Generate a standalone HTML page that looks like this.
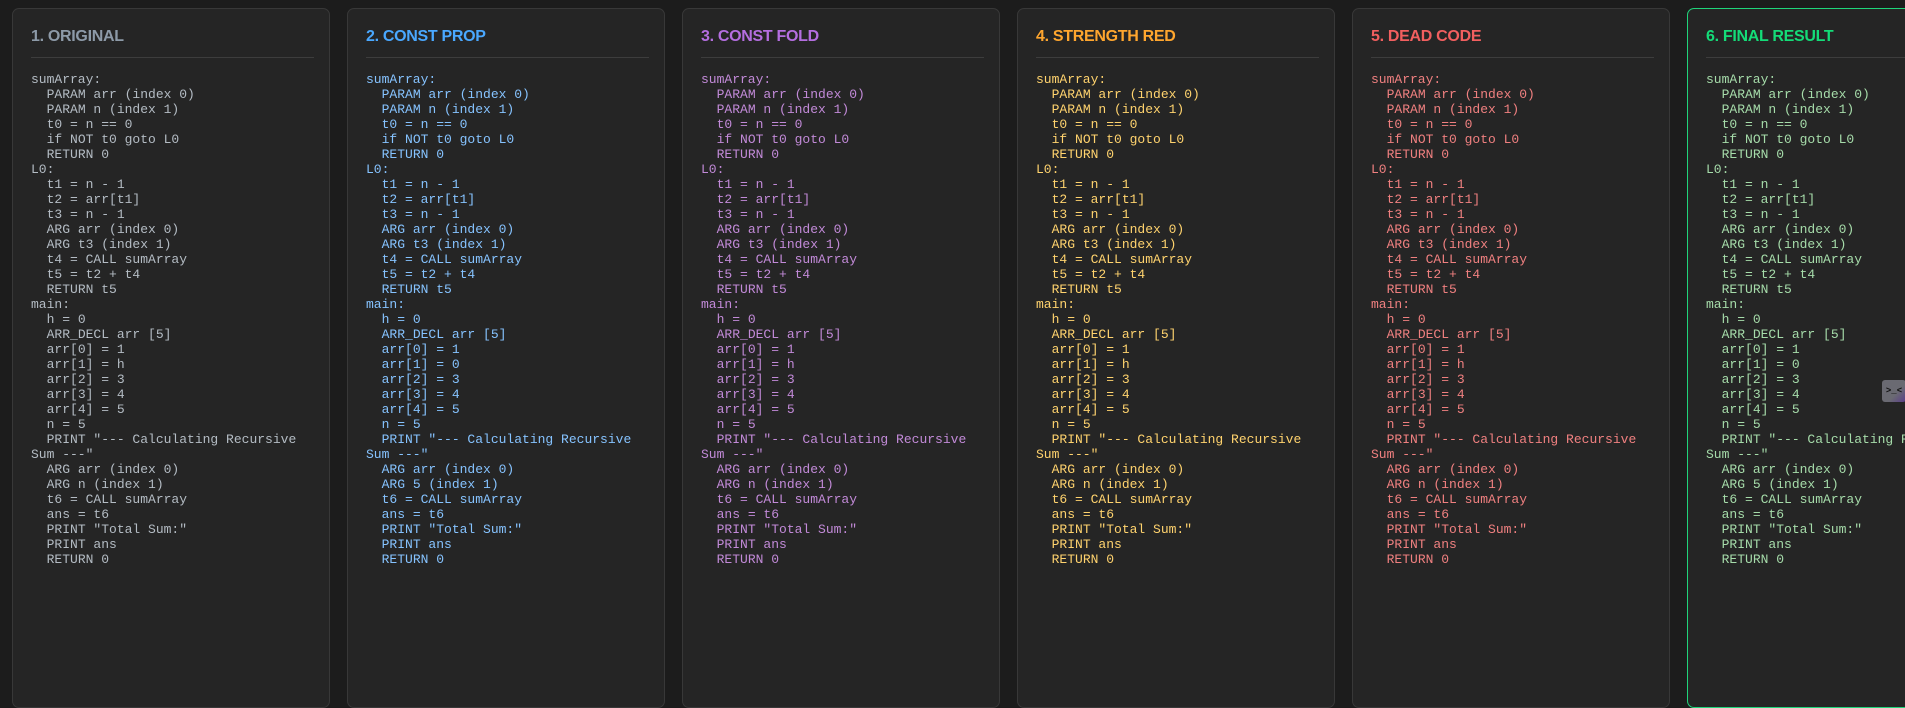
<!DOCTYPE html>
<html><head><meta charset="utf-8"><style>
html,body{margin:0;padding:0;background:#1c1c1c;width:1905px;height:684px;overflow:hidden}
.p{position:absolute;top:8px;width:318px;height:700px;background:#252525;border:1px solid #383838;border-radius:7px;box-sizing:border-box}
.t{position:absolute;left:18px;top:19px;font:bold 16px "Liberation Sans",sans-serif;letter-spacing:-0.3px}
.hr{position:absolute;left:18px;right:15px;top:48px;border-top:1px solid #3d3d3d}
pre{position:absolute;left:18px;top:63px;width:282px;margin:0;font:13px/15px "Liberation Mono","Courier New",monospace;white-space:pre-wrap;word-break:normal}
</style></head><body>
<div class="p" style="left:12px"><div class="t" style="color:#8d9aa8">1. ORIGINAL</div><div class="hr"></div><pre style="color:#b4bcc4">sumArray:
  PARAM arr (index 0)
  PARAM n (index 1)
  t0 = n == 0
  if NOT t0 goto L0
  RETURN 0
L0:
  t1 = n - 1
  t2 = arr[t1]
  t3 = n - 1
  ARG arr (index 0)
  ARG t3 (index 1)
  t4 = CALL sumArray
  t5 = t2 + t4
  RETURN t5
main:
  h = 0
  ARR_DECL arr [5]
  arr[0] = 1
  arr[1] = h
  arr[2] = 3
  arr[3] = 4
  arr[4] = 5
  n = 5
  PRINT "--- Calculating Recursive Sum ---"
  ARG arr (index 0)
  ARG n (index 1)
  t6 = CALL sumArray
  ans = t6
  PRINT "Total Sum:"
  PRINT ans
  RETURN 0</pre></div>
<div class="p" style="left:347px"><div class="t" style="color:#4aa8ff">2. CONST PROP</div><div class="hr"></div><pre style="color:#86c3ff">sumArray:
  PARAM arr (index 0)
  PARAM n (index 1)
  t0 = n == 0
  if NOT t0 goto L0
  RETURN 0
L0:
  t1 = n - 1
  t2 = arr[t1]
  t3 = n - 1
  ARG arr (index 0)
  ARG t3 (index 1)
  t4 = CALL sumArray
  t5 = t2 + t4
  RETURN t5
main:
  h = 0
  ARR_DECL arr [5]
  arr[0] = 1
  arr[1] = 0
  arr[2] = 3
  arr[3] = 4
  arr[4] = 5
  n = 5
  PRINT "--- Calculating Recursive Sum ---"
  ARG arr (index 0)
  ARG 5 (index 1)
  t6 = CALL sumArray
  ans = t6
  PRINT "Total Sum:"
  PRINT ans
  RETURN 0</pre></div>
<div class="p" style="left:682px"><div class="t" style="color:#b46ee0">3. CONST FOLD</div><div class="hr"></div><pre style="color:#c28ad8">sumArray:
  PARAM arr (index 0)
  PARAM n (index 1)
  t0 = n == 0
  if NOT t0 goto L0
  RETURN 0
L0:
  t1 = n - 1
  t2 = arr[t1]
  t3 = n - 1
  ARG arr (index 0)
  ARG t3 (index 1)
  t4 = CALL sumArray
  t5 = t2 + t4
  RETURN t5
main:
  h = 0
  ARR_DECL arr [5]
  arr[0] = 1
  arr[1] = h
  arr[2] = 3
  arr[3] = 4
  arr[4] = 5
  n = 5
  PRINT "--- Calculating Recursive Sum ---"
  ARG arr (index 0)
  ARG n (index 1)
  t6 = CALL sumArray
  ans = t6
  PRINT "Total Sum:"
  PRINT ans
  RETURN 0</pre></div>
<div class="p" style="left:1017px"><div class="t" style="color:#ffa62e">4. STRENGTH RED</div><div class="hr"></div><pre style="color:#ffd36e">sumArray:
  PARAM arr (index 0)
  PARAM n (index 1)
  t0 = n == 0
  if NOT t0 goto L0
  RETURN 0
L0:
  t1 = n - 1
  t2 = arr[t1]
  t3 = n - 1
  ARG arr (index 0)
  ARG t3 (index 1)
  t4 = CALL sumArray
  t5 = t2 + t4
  RETURN t5
main:
  h = 0
  ARR_DECL arr [5]
  arr[0] = 1
  arr[1] = h
  arr[2] = 3
  arr[3] = 4
  arr[4] = 5
  n = 5
  PRINT "--- Calculating Recursive Sum ---"
  ARG arr (index 0)
  ARG n (index 1)
  t6 = CALL sumArray
  ans = t6
  PRINT "Total Sum:"
  PRINT ans
  RETURN 0</pre></div>
<div class="p" style="left:1352px"><div class="t" style="color:#f25f5f">5. DEAD CODE</div><div class="hr"></div><pre style="color:#f08080">sumArray:
  PARAM arr (index 0)
  PARAM n (index 1)
  t0 = n == 0
  if NOT t0 goto L0
  RETURN 0
L0:
  t1 = n - 1
  t2 = arr[t1]
  t3 = n - 1
  ARG arr (index 0)
  ARG t3 (index 1)
  t4 = CALL sumArray
  t5 = t2 + t4
  RETURN t5
main:
  h = 0
  ARR_DECL arr [5]
  arr[0] = 1
  arr[1] = h
  arr[2] = 3
  arr[3] = 4
  arr[4] = 5
  n = 5
  PRINT "--- Calculating Recursive Sum ---"
  ARG arr (index 0)
  ARG n (index 1)
  t6 = CALL sumArray
  ans = t6
  PRINT "Total Sum:"
  PRINT ans
  RETURN 0</pre></div>
<div class="p" style="left:1687px;border-color:#1fd47a"><div class="t" style="color:#14dc78">6. FINAL RESULT</div><div class="hr"></div><pre style="color:#a6dcaa">sumArray:
  PARAM arr (index 0)
  PARAM n (index 1)
  t0 = n == 0
  if NOT t0 goto L0
  RETURN 0
L0:
  t1 = n - 1
  t2 = arr[t1]
  t3 = n - 1
  ARG arr (index 0)
  ARG t3 (index 1)
  t4 = CALL sumArray
  t5 = t2 + t4
  RETURN t5
main:
  h = 0
  ARR_DECL arr [5]
  arr[0] = 1
  arr[1] = 0
  arr[2] = 3
  arr[3] = 4
  arr[4] = 5
  n = 5
  PRINT "--- Calculating Recursive Sum ---"
  ARG arr (index 0)
  ARG 5 (index 1)
  t6 = CALL sumArray
  ans = t6
  PRINT "Total Sum:"
  PRINT ans
  RETURN 0</pre></div>
<div style="position:absolute;left:1882px;top:380px;width:24px;height:22px;background:linear-gradient(135deg,#6a6a72 60%,#5a3d8a);border-radius:3px;color:#111;font:bold 9px 'Liberation Mono',monospace;line-height:22px;text-align:center">&gt;_&lt;</div>
</body></html>
